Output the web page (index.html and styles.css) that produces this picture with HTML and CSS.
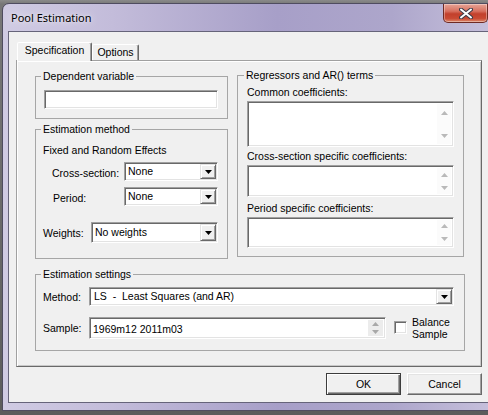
FILE: index.html
```html
<!DOCTYPE html>
<html>
<head>
<meta charset="utf-8">
<title>Pool Estimation</title>
<link rel="stylesheet" href="styles.css">
</head>
<body>
<div class="screen">
  <div class="window">
    <div class="titlebar">
      <span class="title">Pool Estimation</span>
      <div class="close">
        <svg width="14" height="11" viewBox="0 0 14 11">
          <path d="M2 1.5 L12 9.5 M12 1.5 L2 9.5" stroke="#3b3b48" stroke-width="4" stroke-linecap="round"/>
          <path d="M2 1.5 L12 9.5 M12 1.5 L2 9.5" stroke="#ffffff" stroke-width="2" stroke-linecap="round"/>
        </svg>
      </div>
    </div>
    <div class="client">
      <div class="tabs">
        <div class="tab active">Specification</div>
        <div class="tab opt">Options</div>
      </div>
      <div class="pane">
        <div class="cols">
          <div class="col-left">
            <fieldset class="group dep">
              <legend>Dependent variable</legend>
              <div class="sunken edit dep-edit"></div>
            </fieldset>
            <fieldset class="group method">
              <legend>Estimation method</legend>
              <div class="fe-title">Fixed and Random Effects</div>
              <div class="row indent first-row">
                <span class="lbl lbl-fe">Cross-section:</span>
                <div class="sunken combo combo-fe"><span class="val">None</span><span class="dd"><svg width="7" height="4" viewBox="0 0 7 4"><polygon points="0,0 7,0 3.5,4" fill="#000"/></svg></span></div>
              </div>
              <div class="row indent period-row">
                <span class="lbl lbl-fe lbl-period">Period:</span>
                <div class="sunken combo combo-fe"><span class="val">None</span><span class="dd"><svg width="7" height="4" viewBox="0 0 7 4"><polygon points="0,0 7,0 3.5,4" fill="#000"/></svg></span></div>
              </div>
              <div class="row weights-row">
                <span class="lbl lbl-w">Weights:</span>
                <div class="sunken combo combo-w"><span class="val">No weights</span><span class="dd"><svg width="7" height="4" viewBox="0 0 7 4"><polygon points="0,0 7,0 3.5,4" fill="#000"/></svg></span></div>
              </div>
            </fieldset>
          </div>
          <fieldset class="group regress">
            <legend>Regressors and AR() terms</legend>
            <div class="coef-label">Common coefficients:</div>
            <div class="sunken tarea ta1">
              <div class="ta-text"></div>
              <div class="sb">
                <span class="sbb"><svg width="7" height="4" viewBox="0 0 7 4"><polygon points="0,4 7,4 3.5,0" fill="#b9b9b9"/></svg></span>
                <span class="sbb"><svg width="7" height="4" viewBox="0 0 7 4"><polygon points="0,0 7,0 3.5,4" fill="#b9b9b9"/></svg></span>
              </div>
            </div>
            <div class="coef-label">Cross-section specific coefficients:</div>
            <div class="sunken tarea ta2">
              <div class="ta-text"></div>
              <div class="sb">
                <span class="sbb"><svg width="7" height="4" viewBox="0 0 7 4"><polygon points="0,4 7,4 3.5,0" fill="#b9b9b9"/></svg></span>
                <span class="sbb"><svg width="7" height="4" viewBox="0 0 7 4"><polygon points="0,0 7,0 3.5,4" fill="#b9b9b9"/></svg></span>
              </div>
            </div>
            <div class="coef-label">Period specific coefficients:</div>
            <div class="sunken tarea ta3">
              <div class="ta-text"></div>
              <div class="sb">
                <span class="sbb"><svg width="7" height="4" viewBox="0 0 7 4"><polygon points="0,4 7,4 3.5,0" fill="#b9b9b9"/></svg></span>
                <span class="sbb"><svg width="7" height="4" viewBox="0 0 7 4"><polygon points="0,0 7,0 3.5,4" fill="#b9b9b9"/></svg></span>
              </div>
            </div>
          </fieldset>
        </div>
        <fieldset class="group settings">
          <legend>Estimation settings</legend>
          <div class="row method-row">
            <span class="lbl lbl-s">Method:</span>
            <div class="sunken combo combo-m"><span class="val">LS  -  Least Squares (and AR)</span><span class="dd"><svg width="7" height="4" viewBox="0 0 7 4"><polygon points="0,0 7,0 3.5,4" fill="#000"/></svg></span></div>
          </div>
          <div class="row sample-row">
            <span class="lbl lbl-s">Sample:</span>
            <div class="sunken sample">
              <span class="val">1969m12 2011m03</span>
              <span class="spin">
                <span class="spb"><svg width="7" height="4" viewBox="0 0 7 4"><polygon points="0,4 7,4 3.5,0" fill="#a8a8a8"/></svg></span>
                <span class="spb"><svg width="7" height="4" viewBox="0 0 7 4"><polygon points="0,0 7,0 3.5,4" fill="#a8a8a8"/></svg></span>
              </span>
            </div>
            <span class="sunken check"></span>
            <span class="check-label">Balance<br>Sample</span>
          </div>
        </fieldset>
      </div>
      <div class="buttons">
        <button class="btn default">OK</button>
        <button class="btn">Cancel</button>
      </div>
    </div>
  </div>
</div>
</body>
</html>
```
FILE: styles.css
```css
* { box-sizing: border-box; }
html, body { margin: 0; padding: 0; }
body {
  background: #6e6e6e;
  font-family: "Liberation Sans", Arial, sans-serif;
  font-size: 10.5px;
  color: #000;
}
.screen {
  width: 488px;
  height: 415px;
  overflow: hidden;
  padding: 3px 0 0 2px;
  background: linear-gradient(#8a8a8a 0, #777 4px, #5c5c5c 100%);
}
.window {
  width: 500px;
  border: 1px solid #4f4c60;
  border-radius: 7px 7px 0 0;
  background: linear-gradient(90deg, #d0cbe3 0%, #c3bcda 22%, #a79fc8 55%, #ada6cb 78%, #c8c2dd 100%);
  padding: 0 0 7px 0;
}
.titlebar {
  height: 27px;
  display: flex;
  align-items: flex-start;
}
.title {
  font-family: "Noto Sans", "Open Sans", sans-serif;
  font-size: 11px;
  line-height: 27px;
  padding-left: 8px;
  color: #000;
  text-shadow: 0 0 8px rgba(255,255,255,0.9), 0 0 3px rgba(255,255,255,0.6);
}
.close {
  margin-left: auto;
  margin-right: 13px;
  width: 45px;
  height: 19px;
  border: 1px solid #6e2a24;
  border-top: none;
  border-radius: 0 0 5px 5px;
  background: linear-gradient(#e6a496 0%, #d7705f 40%, #c2402c 55%, #c94a33 80%, #dd8a6e 100%);
  box-shadow: inset 0 0 0 1px rgba(255,255,255,0.35);
  display: flex;
  align-items: center;
  justify-content: center;
}
.client {
  margin: 0 5px;
  height: 372px;
  border: 1px solid #66647a;
  background: #f0f0f0;
  padding: 10px 7px 7px 7px;
}
.tabs {
  display: flex;
  align-items: flex-end;
  height: 19px;
  padding-left: 1px;
  margin-bottom: -1px;
  position: relative;
  z-index: 1;
}
.tab {
  height: 16px;
  margin-bottom: 1px;
  border: 1px solid;
  border-bottom: none;
  border-color: #fff #696969 transparent #fff;
  box-shadow: inset -1px 0 0 #a0a0a0;
  border-radius: 2px 2px 0 0;
  background: #f0f0f0;
  text-align: center;
  line-height: 14px;
}
.tab.active {
  width: 75px;
  height: 19px;
  margin-bottom: 0;
  line-height: 15px;
}
.tab.opt { width: 47px; }
.pane {
  width: 466px;
  height: 307px;
  border: 1px solid;
  border-color: #a0a0a0 #696969 #696969 #a0a0a0;
  box-shadow: inset 1px 1px 0 #fff, inset -1px -1px 0 #c8c8c8;
  padding: 9px 16px 17px 18px;
}
.cols {
  display: flex;
  gap: 9px;
  align-items: flex-start;
}
.col-left { width: 193px; }
.group {
  margin: 0;
  min-width: 0;
  border: 1px solid #a6a6a6;
}
.group legend {
  padding: 0 2px;
  margin-left: -2px;
  line-height: 13px;
}
.dep { padding: 7px 9px 9px 7px; }
.dep-edit { width: 174px; height: 19px; margin-left: 1px; }
.method { margin-top: 4px; padding: 8px 9px 15px 7px; }
.fe-title { line-height: 13px; }
.row { display: flex; align-items: center; }
.first-row { margin-top: 5px; }
.period-row { margin-top: 6px; }
.weights-row { margin-top: 16px; }
.indent { padding-left: 9px; }
.lbl-fe { width: 72px; padding-top: 3px; }
.lbl-period { padding-left: 1px; }
.lbl-w { width: 48px; }
.sunken {
  border: 1px solid;
  border-color: #a0a0a0 #fff #fff #a0a0a0;
  box-shadow: inset 1px 1px 0 #696969, inset -1px -1px 0 #e3e3e3;
  background: #fff;
}
.combo {
  display: flex;
  align-items: stretch;
  height: 19px;
}
.combo .val {
  flex: 1;
  padding-left: 3px;
  white-space: pre;
  line-height: 17px;
}
.combo .dd {
  width: 16px;
  margin: 1px;
  border: 1px solid;
  border-color: #e3e3e3 #696969 #696969 #e3e3e3;
  box-shadow: inset 1px 1px 0 #fff, inset -1px -1px 0 #a0a0a0;
  background: #f0f0f0;
  display: flex;
  align-items: center;
  justify-content: center;
}
.combo-fe { width: 94px; }
.combo-w { width: 127px; height: 21px; }
.combo-w .val { line-height: 19px; padding-left: 3px; }
.regress { width: 227px; margin-top: -1px; padding: 4px 9px 8px 9px; }
.regress legend { margin-left: -3px; }
.coef-label { line-height: 13px; margin-bottom: 2px; }
.tarea {
  display: flex;
  width: 207px;
  padding: 2px;
}
.ta1 { height: 46px; margin-bottom: 3px; }
.ta2 { height: 32px; margin-bottom: 5px; }
.ta3 { height: 31px; }
.ta-text { flex: 1; }
.sb {
  width: 14px;
  display: flex;
  flex-direction: column;
  justify-content: space-between;
  background: #fbfbfb;
}
.sbb {
  flex: 0 1 17px;
  display: flex;
  align-items: center;
  justify-content: center;
  min-height: 0;
}
.settings { width: 430px; margin-top: 9px; padding: 6px 10px 10px 7px; }
.lbl-s { width: 46px; }
.combo-m { width: 365px; }
.combo-m .val { padding-left: 4px; }
.sample-row { margin-top: 10px; }
.sample {
  width: 297px;
  height: 22px;
  display: flex;
  align-items: stretch;
  padding: 2px;
}
.sample .val { flex: 1; line-height: 18px; padding-left: 1px; }
.spin {
  width: 15px;
  display: flex;
  flex-direction: column;
  background: #ececec;
}
.spb {
  flex: 1;
  display: flex;
  align-items: center;
  justify-content: center;
}
.check {
  width: 13px;
  height: 13px;
  margin-left: 8px;
  margin-top: -1px;
}
.check-label {
  margin-left: 5px;
  line-height: 12px;
}
.buttons {
  display: flex;
  justify-content: flex-end;
  gap: 6px;
  width: 466px;
  margin-top: 6px;
}
.btn {
  width: 75px;
  height: 22px;
  padding: 0;
  font: inherit;
  color: #000;
  background: #f0f0f0;
  border: 1px solid;
  border-color: #fff #696969 #696969 #fff;
  box-shadow: inset -1px -1px 0 #a0a0a0, inset 1px 1px 0 #e3e3e3;
  border-radius: 0;
}
.btn.default {
  border-color: #3c3c3c;
  box-shadow: inset 1px 1px 0 #fff, inset -1px -1px 0 #696969, inset -2px -2px 0 #a0a0a0;
}
```
